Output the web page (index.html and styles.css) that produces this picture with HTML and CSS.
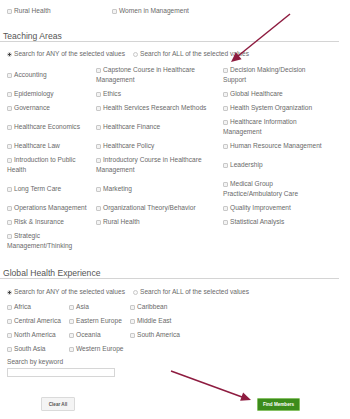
FILE: index.html
```html
<!doctype html>
<html lang="en">
	<head>
		<meta charset="UTF-8">
		<title>Find Members</title>
		<link rel="stylesheet" href="styles.css">
	</head>
	<body>
		<div class="page">
			<div class="toprow">
				<label class="opt"><input type="checkbox">Rural Health</label>
				<label class="opt"><input type="checkbox">Women in Management</label>
			</div>

			<h3>Teaching Areas</h3>
			<div class="radios">
				<label class="opt"><input type="radio" name="ta" checked>Search for ANY of the selected values</label>
				<label class="opt"><input type="radio" name="ta">Search for ALL of the selected values</label>
			</div>
			<div class="areas">
				<label class="opt"><input type="checkbox">Accounting</label>
				<label class="opt"><input type="checkbox">Capstone Course in Healthcare Management</label>
				<label class="opt"><input type="checkbox">Decision Making/Decision Support</label>
				<label class="opt"><input type="checkbox">Epidemiology</label>
				<label class="opt"><input type="checkbox">Ethics</label>
				<label class="opt"><input type="checkbox">Global Healthcare</label>
				<label class="opt"><input type="checkbox">Governance</label>
				<label class="opt"><input type="checkbox">Health Services Research Methods</label>
				<label class="opt"><input type="checkbox">Health System Organization</label>
				<label class="opt"><input type="checkbox">Healthcare Economics</label>
				<label class="opt"><input type="checkbox">Healthcare Finance</label>
				<label class="opt"><input type="checkbox">Healthcare Information Management</label>
				<label class="opt"><input type="checkbox">Healthcare Law</label>
				<label class="opt"><input type="checkbox">Healthcare Policy</label>
				<label class="opt"><input type="checkbox">Human Resource Management</label>
				<label class="opt"><input type="checkbox">Introduction to Public Health</label>
				<label class="opt"><input type="checkbox">Introductory Course in Healthcare Management</label>
				<label class="opt"><input type="checkbox">Leadership</label>
				<label class="opt"><input type="checkbox">Long Term Care</label>
				<label class="opt"><input type="checkbox">Marketing</label>
				<label class="opt"><input type="checkbox">Medical Group Practice/Ambulatory Care</label>
				<label class="opt"><input type="checkbox">Operations Management</label>
				<label class="opt"><input type="checkbox">Organizational Theory/Behavior</label>
				<label class="opt"><input type="checkbox">Quality Improvement</label>
				<label class="opt"><input type="checkbox">Risk &amp; Insurance</label>
				<label class="opt"><input type="checkbox">Rural Health</label>
				<label class="opt"><input type="checkbox">Statistical Analysis</label>
				<label class="opt"><input type="checkbox">Strategic Management/Thinking</label>
			</div>

			<h3 class="global">Global Health Experience</h3>
			<div class="radios radios2">
				<label class="opt"><input type="radio" name="gh" checked>Search for ANY of the selected values</label>
				<label class="opt"><input type="radio" name="gh">Search for ALL of the selected values</label>
			</div>
			<div class="regions">
				<label class="opt"><input type="checkbox">Africa</label>
				<label class="opt"><input type="checkbox">Asia</label>
				<label class="opt"><input type="checkbox">Caribbean</label>
				<label class="opt"><input type="checkbox">Central America</label>
				<label class="opt"><input type="checkbox">Eastern Europe</label>
				<label class="opt"><input type="checkbox">Middle East</label>
				<label class="opt"><input type="checkbox">North America</label>
				<label class="opt"><input type="checkbox">Oceania</label>
				<label class="opt"><input type="checkbox">South America</label>
				<label class="opt"><input type="checkbox">South Asia</label>
				<label class="opt"><input type="checkbox">Western Europe</label>
			</div>

			<div class="keyword">
				<p>Search by keyword</p>
				<input type="text" class="kw">
			</div>

			<div class="actions">
				<input type="button" class="but" value="Clear All">
				<input type="button" class="but go" value="Find Members">
			</div>
		</div>

		<svg class="arrows" width="350" height="419" viewBox="0 0 350 419">
			<line x1="290" y1="14" x2="238" y2="56" />
			<polygon points="231,62 241.6,59.2 235.9,52.2" />
			<line x1="171" y1="371" x2="242" y2="397" />
			<polygon points="251,400 240.1,400.8 243.1,392.4" />
		</svg>
	</body>
</html>
```

FILE: styles.css
```css
body{margin:0; background:#fff; font-family:"Liberation Sans", Arial, sans-serif; font-size:6.6px; color:#6a6a6a;}
p{margin:0; padding:0;}
.page{padding:6px 0 0 0; width:339px;}
h3{margin:15px 0 0 0; padding:0 0 0 3px; font-size:8.6px; font-weight:normal; color:#555; line-height:10px; border-bottom:1px solid #d4d4d4;}

.opt{display:block; line-height:10px;}
.opt input{appearance:none; -webkit-appearance:none; margin:0 2px 0 0; padding:0; width:5px; height:5px; border:1px solid #c8c8c8; background:#f3f3f3; border-radius:1px; vertical-align:-0.5px; box-sizing:border-box;}
.opt input[type=radio]{border-radius:50%; background:#fafafa;}
.opt input[type=radio]:checked{background:radial-gradient(circle, #444 0 1.2px, #fafafa 1.4px);}

.toprow{display:grid; grid-template-columns:105px 1fr; padding-left:7px;}

.radios{display:grid; grid-template-columns:126px 1fr; padding-left:7px; margin-top:7px;}
.radios2{margin-top:8px;}

.areas{display:grid; grid-template-columns:89px 127px 105px; align-items:center; padding-left:7px; margin-top:4px;}
.areas .opt{padding:2px 4px 2px 0;}

.regions{display:grid; grid-template-columns:62px 61px 80px; align-items:center; padding-left:7px; margin-top:3px;}
.regions .opt{padding:2px 0;}

.keyword{padding-left:7px; margin-top:1px; line-height:10px;}
.kw{display:block; margin:1px 0 0 0; width:108px; height:9px; border:1px solid #d6d6d6; padding:0; box-sizing:border-box; background:#fff;}

.actions{display:flex; gap:182px; padding-left:41px; margin-top:20px;}
.but{font-family:"Liberation Sans", Arial, sans-serif; font-size:4.6px; font-weight:bold; color:#555; border:1px solid #dadada; background:#f4f4f4; height:14px; width:34px; padding:0; border-radius:1px; cursor:pointer;}
.go{width:43px; height:13px; margin-top:1px; color:#fff; background:#3c8c1c; border:1px solid #86c064;}

.arrows{position:absolute; left:0; top:0; pointer-events:none;}
.arrows line{stroke:#8e1c40; stroke-width:1.5;}
.arrows polygon{fill:#8e1c40;}
```
